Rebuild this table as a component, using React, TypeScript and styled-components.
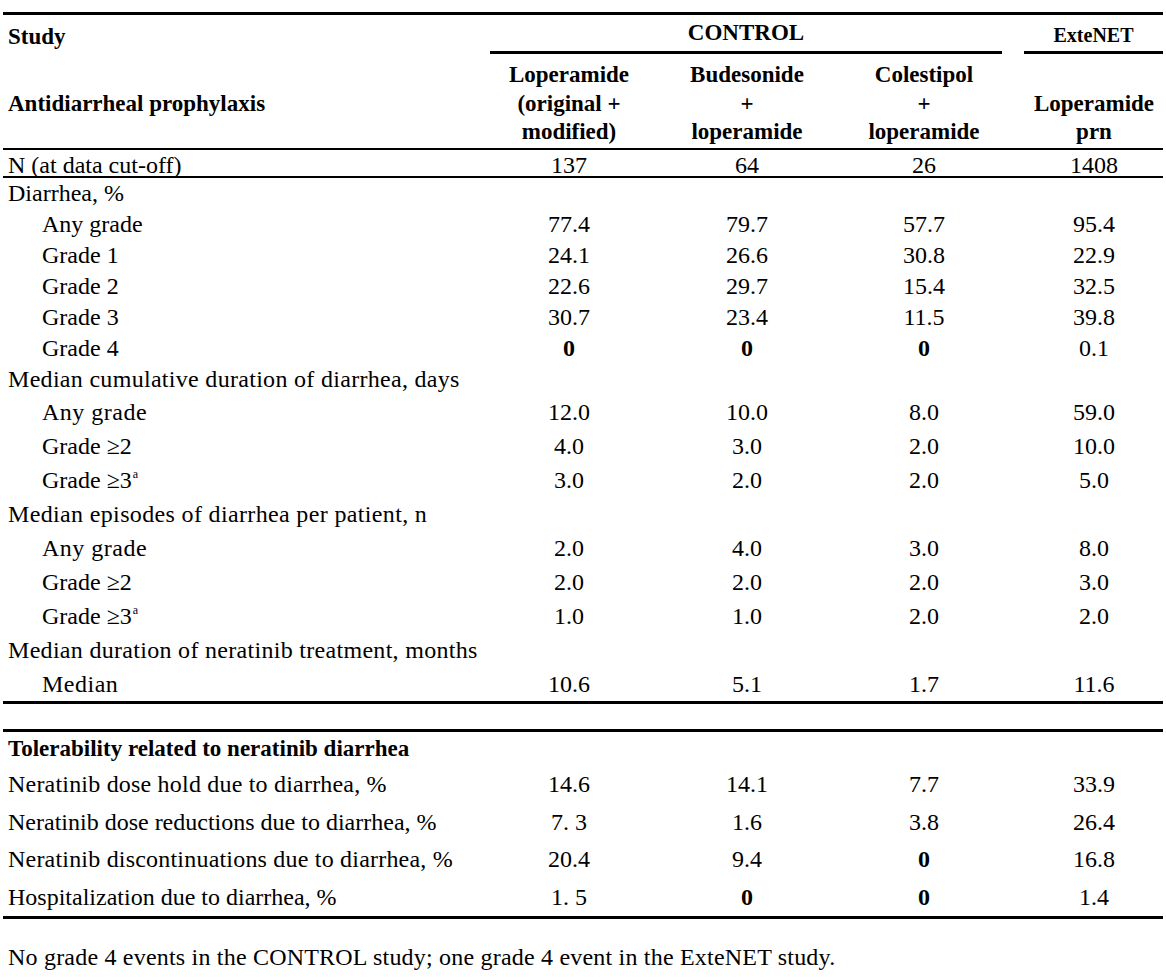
import React from 'react'
import styled, { createGlobalStyle } from 'styled-components'

const GlobalStyle = createGlobalStyle`
  html, body {
    margin: 0;
    padding: 0;
    background: #fff;
  }
  body {
    font-family: 'Liberation Serif', 'Times New Roman', serif;
    color: #000;
  }
`

// label | loperamide | budesonide | colestipol | extenet
const COLS = '487px 158px 198px 156px 161px'

const Page = styled.div`
  width: 1160px;
  padding: 12px 0 0 3px;
`

const Table = styled.div`
  border-top: 3px solid #000;
`

const HeadTop = styled.div`
  display: grid;
  grid-template-columns: ${COLS};
  height: 42px;
  font-weight: bold;
  font-size: 23px;
`

const StudyCell = styled.div`
  padding-left: 5px;
  line-height: 39px;
  padding-top: 2px;
`

const GroupCell = styled.div<{ $span?: number; $offset?: number }>`
  grid-column: span ${({ $span }) => $span || 1};
  margin-left: ${({ $offset }) => $offset || 0}px;
  height: 36px;
  line-height: 36px;
  border-bottom: 3px solid #000;
  text-align: center;
`

const SmallGroup = styled.span`
  font-size: 20px;
  position: relative;
  top: 2px;
`

const HeadSub = styled.div`
  display: grid;
  grid-template-columns: ${COLS};
  height: 91px;
  border-bottom: 2px solid #000;
  font-weight: bold;
  font-size: 23px;
`

const HeadLabel = styled.div`
  padding-left: 5px;
  align-self: center;
  padding-top: 2px;
`

const HeadCol = styled.div<{ $pad?: number; $bottom?: boolean }>`
  display: flex;
  flex-direction: column;
  justify-content: ${({ $bottom }) => ($bottom ? 'flex-end' : 'flex-start')};
  padding: 4px 0 3px ${({ $pad }) => $pad || 0}px;
  line-height: 28.5px;
  text-align: center;
`

const Row = styled.div<{ $h: number; $rule?: number }>`
  display: grid;
  grid-template-columns: ${COLS};
  align-items: center;
  height: ${({ $h }) => $h}px;
  font-size: 24px;
  border-bottom: ${({ $rule }) => ($rule ? `${$rule}px solid #000` : 'none')};
`

const NRow = styled(Row)`
  align-items: start;
  line-height: 24px;
  padding-top: 3px;
  box-sizing: content-box;
`

const Label = styled.div<{ $indent?: boolean; $bold?: boolean; $spacing?: number }>`
  padding-left: ${({ $indent }) => ($indent ? 39 : 5)}px;
  font-weight: ${({ $bold }) => ($bold ? 'bold' : 'normal')};
  font-size: ${({ $bold }) => ($bold ? '23px' : '24px')};
  letter-spacing: ${({ $spacing }) => $spacing || 0}px;
  white-space: nowrap;
`

const Sup = styled.sup`
  font-size: 12px;
  vertical-align: 10px;
  line-height: 0;
  margin-left: 1px;
`

const Value = styled.div<{ $pad?: number; $bold?: boolean }>`
  text-align: center;
  padding-left: ${({ $pad }) => $pad || 0}px;
  font-weight: ${({ $bold }) => ($bold ? 'bold' : 'normal')};
`

const Gap = styled.div`
  height: 25px;
`

const Note = styled.p`
  margin: 25px 0 0;
  padding-left: 5px;
  font-size: 24px;
  line-height: 26px;
  letter-spacing: 0.2px;
`

type Line = {
  label: React.ReactNode
  values?: string[]
  indent?: boolean
  spacing?: number
  h: number
  rule?: number
}

const ge3 = (
  <>
    Grade ≥3<Sup>a</Sup>
  </>
)

const outcomes: Line[] = [
  { label: 'Diarrhea, %', h: 31 },
  { label: 'Any grade', indent: true, values: ['77.4', '79.7', '57.7', '95.4'], h: 31 },
  { label: 'Grade 1', indent: true, values: ['24.1', '26.6', '30.8', '22.9'], h: 31 },
  { label: 'Grade 2', indent: true, values: ['22.6', '29.7', '15.4', '32.5'], h: 31 },
  { label: 'Grade 3', indent: true, values: ['30.7', '23.4', '11.5', '39.8'], h: 31 },
  { label: 'Grade 4', indent: true, values: ['0', '0', '0', '0.1'], h: 31 },
  { label: 'Median cumulative duration of diarrhea, days', spacing: 0.3, h: 31 },
  { label: 'Any grade', indent: true, spacing: 0.5, values: ['12.0', '10.0', '8.0', '59.0'], h: 34 },
  { label: 'Grade ≥2', indent: true, values: ['4.0', '3.0', '2.0', '10.0'], h: 34 },
  { label: ge3, indent: true, values: ['3.0', '2.0', '2.0', '5.0'], h: 34 },
  { label: 'Median episodes of diarrhea per patient, n', spacing: 0.35, h: 34 },
  { label: 'Any grade', indent: true, spacing: 0.5, values: ['2.0', '4.0', '3.0', '8.0'], h: 34 },
  { label: 'Grade ≥2', indent: true, values: ['2.0', '2.0', '2.0', '3.0'], h: 34 },
  { label: ge3, indent: true, values: ['1.0', '1.0', '2.0', '2.0'], h: 34 },
  { label: 'Median duration of neratinib treatment, months', spacing: 0.3, h: 34 },
  { label: 'Median', indent: true, spacing: 0.5, values: ['10.6', '5.1', '1.7', '11.6'], h: 34, rule: 3 },
]

const tolerability: Line[] = [
  { label: 'Neratinib dose hold due to diarrhea, %', spacing: 0.2, values: ['14.6', '14.1', '7.7', '33.9'], h: 37.5 },
  { label: 'Neratinib dose reductions due to diarrhea, %', values: ['7. 3', '1.6', '3.8', '26.4'], h: 37.5 },
  { label: 'Neratinib discontinuations due to diarrhea, %', spacing: 0.2, values: ['20.4', '9.4', '0', '16.8'], h: 37.5 },
  { label: 'Hospitalization due to diarrhea, %', values: ['1. 5', '0', '0', '1.4'], h: 37.5, rule: 3 },
]

const PADS = [0, 0, 0, 23]

const DataRow = ({ line }: { line: Line }) => (
  <Row $h={line.h} $rule={line.rule}>
    <Label $indent={line.indent} $spacing={line.spacing}>
      {line.label}
    </Label>
    {line.values?.map((v, i) => (
      <Value key={i} $pad={PADS[i]} $bold={v === '0'}>
        {v}
      </Value>
    ))}
  </Row>
)

const App = () => (
  <Page>
    <GlobalStyle />
    <Table>
      <HeadTop>
        <StudyCell>Study</StudyCell>
        <GroupCell $span={3}>CONTROL</GroupCell>
        <GroupCell $offset={22}>
          <SmallGroup>ExteNET</SmallGroup>
        </GroupCell>
      </HeadTop>
      <HeadSub>
        <HeadLabel>Antidiarrheal prophylaxis</HeadLabel>
        <HeadCol>
          <span>Loperamide</span>
          <span>(original +</span>
          <span>modified)</span>
        </HeadCol>
        <HeadCol>
          <span>Budesonide</span>
          <span>+</span>
          <span>loperamide</span>
        </HeadCol>
        <HeadCol>
          <span>Colestipol</span>
          <span>+</span>
          <span>loperamide</span>
        </HeadCol>
        <HeadCol $pad={23} $bottom>
          <span>Loperamide</span>
          <span>prn</span>
        </HeadCol>
      </HeadSub>
      <NRow $h={23} $rule={2}>
        <Label>N (at data cut-off)</Label>
        {['137', '64', '26', '1408'].map((v, i) => (
          <Value key={i} $pad={PADS[i]}>
            {v}
          </Value>
        ))}
      </NRow>
      {outcomes.map((line, i) => (
        <DataRow key={i} line={line} />
      ))}
    </Table>
    <Gap />
    <Table>
      <Row $h={34}>
        <Label $bold>Tolerability related to neratinib diarrhea</Label>
      </Row>
      {tolerability.map((line, i) => (
        <DataRow key={i} line={line} />
      ))}
    </Table>
    <Note>
      No grade 4 events in the CONTROL study; one grade 4 event in the ExteNET study.
    </Note>
  </Page>
)

export default App
